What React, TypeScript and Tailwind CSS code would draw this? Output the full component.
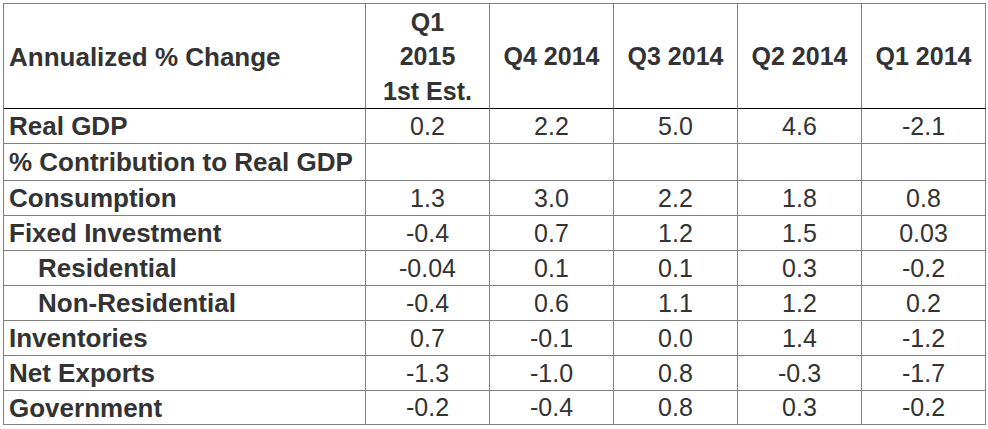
import React from "react";

const headers = [["Q1", "2015", "1st Est."], ["Q4 2014"], ["Q3 2014"], ["Q2 2014"], ["Q1 2014"]];

const rows: { label: string; indent?: boolean; vals: string[]; h: string }[] = [
  { label: "Real GDP", vals: ["0.2", "2.2", "5.0", "4.6", "-2.1"], h: "h-[35px]" },
  { label: "% Contribution to Real GDP", vals: ["", "", "", "", ""], h: "h-[37px]" },
  { label: "Consumption", vals: ["1.3", "3.0", "2.2", "1.8", "0.8"], h: "h-[35px]" },
  { label: "Fixed Investment", vals: ["-0.4", "0.7", "1.2", "1.5", "0.03"], h: "h-[35px]" },
  { label: "Residential", indent: true, vals: ["-0.04", "0.1", "0.1", "0.3", "-0.2"], h: "h-[35px]" },
  { label: "Non-Residential", indent: true, vals: ["-0.4", "0.6", "1.1", "1.2", "0.2"], h: "h-[35px]" },
  { label: "Inventories", vals: ["0.7", "-0.1", "0.0", "1.4", "-1.2"], h: "h-[35px]" },
  { label: "Net Exports", vals: ["-1.3", "-1.0", "0.8", "-0.3", "-1.7"], h: "h-[35px]" },
  { label: "Government", vals: ["-0.2", "-0.4", "0.8", "0.3", "-0.2"], h: "h-[34px]" },
];

export default function App() {
  return (
    <div className="w-[988px] h-[429px] bg-white pt-[3px] pl-[3px] text-[#333333] [font-family:'Liberation_Sans',Arial,sans-serif]">
      <div className="grid grid-cols-[362px_repeat(5,124px)] w-[983px] border-l border-t border-[#808080]">
        <div className="h-[105px] border-r border-r-[#808080] border-b border-b-black flex items-center pl-[5px] pt-[1px] font-bold text-[26px] leading-none">
          Annualized % Change
        </div>
        {headers.map((h, i) => (
          <div
            key={i}
            className="h-[105px] border-r border-r-[#808080] border-b border-b-black flex flex-col items-center justify-center pt-[1px] font-bold text-[25px] leading-[34.5px]"
          >
            {h.map((t, j) => (
              <span key={j}>{t}</span>
            ))}
          </div>
        ))}
        {rows.map((r, i) => (
          <React.Fragment key={i}>
            <div
              className={`${r.h} border-r border-b border-[#808080] flex items-center font-bold text-[26px] leading-none ${r.indent ? "pl-[34px]" : "pl-[5px]"}`}
            >
              {r.label}
            </div>
            {r.vals.map((v, j) => (
              <div key={j} className={`${r.h} border-r border-b border-[#808080] flex items-center justify-center text-[25px] leading-none`}>
                {v}
              </div>
            ))}
          </React.Fragment>
        ))}
      </div>
    </div>
  );
}
